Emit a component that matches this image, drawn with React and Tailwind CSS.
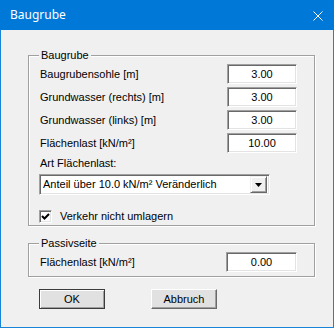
import React from 'react';

const sunken = 'border border-[#a0a0a0] border-b-white border-r-white shadow-[inset_1px_1px_0_#696969,inset_-1px_-1px_0_#e3e3e3] bg-white';

function Field({ value }) {
    return (
        <div className={`${sunken} w-[70px] h-[20px] flex items-center justify-center text-[11px] text-black`}>
            {value}
        </div>
    );
}

function Row({ label, value }) {
    return (
        <div className="flex items-center justify-between h-[20px]">
            <span>{label}</span>
            <Field value={value} />
        </div>
    );
}

function Group({ title, className, children }) {
    return (
        <div className={`relative w-[287px] border border-[#a0a0a0] shadow-[1px_1px_0_#fff,inset_1px_1px_0_#fff] ${className}`}>
            <span className="absolute -top-[8px] left-[10px] px-[2px] bg-[#f0f0f0] leading-[14px]">{title}</span>
            {children}
        </div>
    );
}

function Button({ children, def }) {
    return (
        <button
            className={`w-[66px] h-[20px] bg-[#e1e1e1] text-[11px] text-black flex items-center justify-center ${
                def
                    ? 'border border-[#3c3c3c] shadow-[inset_1px_1px_0_#fff,inset_-1px_-1px_0_#a0a0a0]'
                    : 'border border-white border-b-[#696969] border-r-[#696969] shadow-[inset_-1px_-1px_0_#a0a0a0]'
            }`}
        >
            {children}
        </button>
    );
}

export default function App() {
    return (
        <div className="w-[334px] h-[328px] flex flex-col border border-t-0 border-[#1883d7] bg-[#f0f0f0] text-[11px] text-black font-['Liberation_Sans',Arial,sans-serif]">
            {/* Titelleiste */}
            <div className="h-[30px] -mx-px bg-[#0078d7] flex items-center justify-between pl-[10px] pr-[11px] text-white text-[12px] font-['Noto_Sans','Open_Sans',sans-serif]">
                <span>Baugrube</span>
                <svg width="10" height="10" viewBox="0 0 10 10" className="mt-px">
                    <path d="M0.5 0.5 L9.5 9.5 M9.5 0.5 L0.5 9.5" stroke="#fff" strokeWidth="1" />
                </svg>
            </div>

            <div className="flex-1 pl-[27px] pt-[25px]">
                <Group title="Baugrube" className="h-[171px] pt-[8px] pl-[11px] pr-[17px]">
                    <div className="flex flex-col gap-[3px]">
                        <Row label="Baugrubensohle [m]" value="3.00" />
                        <Row label="Grundwasser (rechts) [m]" value="3.00" />
                        <Row label="Grundwasser (links) [m]" value="3.00" />
                        <Row label="Flächenlast [kN/m²]" value="10.00" />
                    </div>
                    <div className="mt-[3px] h-[14px] leading-[14px]">Art Flächenlast:</div>
                    <div className={`${sunken} mt-[4px] -ml-[1px] w-[231px] h-[21px] flex items-center justify-between pl-[3px] pr-[2px]`}>
                        <span>Anteil über 10.0 kN/m² Veränderlich</span>
                        <div className="w-[17px] h-[17px] bg-[#f0f0f0] border border-[#f0f0f0] border-b-[#696969] border-r-[#696969] shadow-[inset_1px_1px_0_#fff,inset_-1px_-1px_0_#a0a0a0] flex items-center justify-center">
                            <svg width="7" height="4" viewBox="0 0 7 4">
                                <path d="M0 0 H7 L3.5 4 Z" fill="#000" />
                            </svg>
                        </div>
                    </div>
                    <div className="mt-[13px] -ml-[1px] flex items-center gap-[8px]">
                        <div className={`${sunken} w-[13px] h-[13px] flex items-center justify-center`}>
                            <svg width="9" height="9" viewBox="0 0 9 9">
                                <path d="M1 4 L3.5 6.5 L8 2" stroke="#000" strokeWidth="2" fill="none" />
                            </svg>
                        </div>
                        <span>Verkehr nicht umlagern</span>
                    </div>
                </Group>

                <Group title="Passivseite" className="mt-[17px] h-[34px] pt-[8px] pl-[11px] pr-[17px]">
                    <div className="flex items-center justify-between h-[20px]">
                        <span>Flächenlast [kN/m²]</span>
                        <div className={`${sunken} w-[71px] h-[20px] flex items-center justify-center`}>0.00</div>
                    </div>
                </Group>

                <div className="mt-[12px] ml-[11px] flex gap-[46px]">
                    <Button def>OK</Button>
                    <Button>Abbruch</Button>
                </div>
            </div>
        </div>
    );
}
